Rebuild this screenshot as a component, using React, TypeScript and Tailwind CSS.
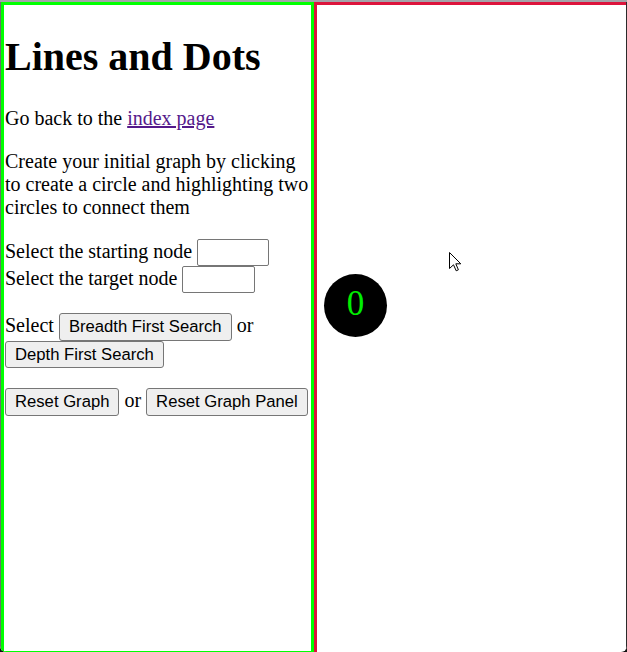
import React from "react";

export default function App() {
  const btn =
    "inline-block h-[27.5px] px-[9px] align-baseline border border-[#767676] rounded-[3px] bg-[#efefef] text-black font-['Liberation_Sans',Arial,sans-serif] text-[16.67px] leading-[19px]";
  const inp =
    "inline-block h-[27px] align-baseline border border-[#767676] rounded-[2px] bg-white px-[2px] font-['Liberation_Sans',Arial,sans-serif] text-[16.67px] leading-[19px]";
  return (
    <div className="w-[627px] h-[652px] overflow-hidden bg-[#111]">
      <div className="w-full h-full rounded-b-[6px] overflow-hidden bg-white flex flex-col">
        <div className="h-[2px] shrink-0 bg-[#a4a4aa]" />
        <div className="flex flex-row items-start flex-1 min-h-0">
          <div className="w-[1px] h-full shrink-0 bg-[#6b6b6b]" />
          <div className="w-[313px] h-[652px] shrink-0 border-[3px] border-[#00ff00] pl-[1px] pr-[2px] pt-[2.5px] font-['Liberation_Serif','Times_New_Roman',serif] text-[20px] leading-[23px] text-black">
            <h1 className="text-[40px] leading-[46px] font-bold my-[26.8px]">Lines and Dots</h1>
            <p className="my-[20px]">
              Go back to the{" "}
              <a href="#" className="text-[#551a8b] underline">
                index page
              </a>
            </p>
            <p className="my-[20px]">
              Create your initial graph by clicking to create a circle and highlighting two circles to connect them
            </p>
            <p className="my-[20px]">
              Select the starting node <input type="text" className={`${inp} w-[72px]`} />
              <br />
              Select the target node <input type="text" className={`${inp} w-[73px]`} />
            </p>
            <p className="my-[20px]">
              Select <button className={btn}>Breadth First Search</button> or{" "}
              <button className={btn}>Depth First Search</button>
            </p>
            <p className="my-[20px]">
              <button className={btn}>Reset Graph</button> or{" "}
              <button className={btn}>Reset Graph Panel</button>
            </p>
          </div>
          <div className="relative flex-1 h-full border-l-[3px] border-t-[3px] border-[#dc143c]">
            <div className="absolute left-[7px] top-[269px] w-[63px] h-[63px] rounded-full bg-black flex items-center justify-center">
              <span className="font-['Liberation_Serif','Times_New_Roman',serif] text-[35px] leading-none text-[#00ee00] -mt-[4px]">
                0
              </span>
            </div>
            <svg
              className="absolute left-[132px] top-[247px]"
              width="13"
              height="20"
              viewBox="0 0 13 20"
            >
              <path
                d="M0.5 0.5 L0.5 16.5 L4.5 12.8 L7.2 18.8 L9.4 17.8 L6.8 11.8 L11.8 11.8 Z"
                fill="white"
                stroke="black"
                strokeWidth="1"
                strokeLinejoin="miter"
              />
            </svg>
          </div>
          <div className="w-[1px] h-full shrink-0 bg-[#2a2a2a]" />
        </div>
      </div>
    </div>
  );
}
